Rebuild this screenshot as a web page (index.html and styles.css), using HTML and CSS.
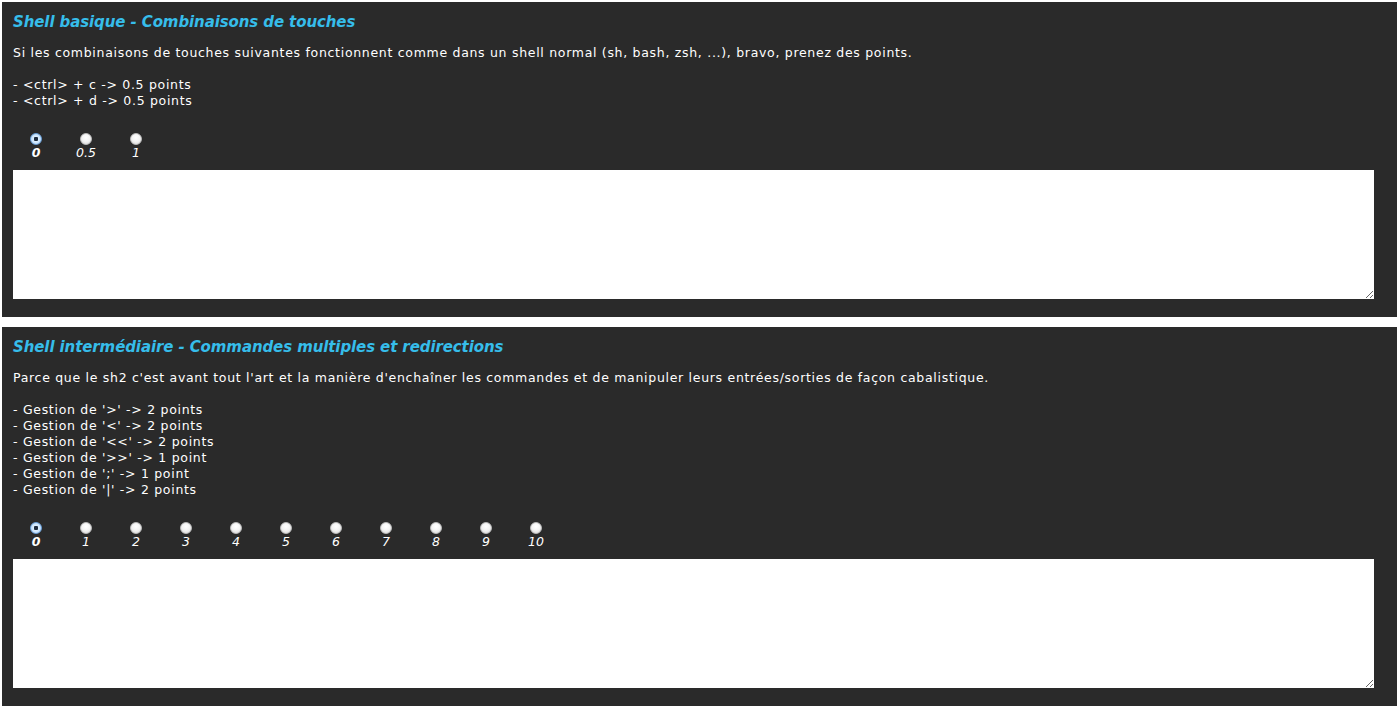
FILE: index.html
```html
<!DOCTYPE html>
<html lang="fr">
<head>
<meta charset="utf-8">
<title>Correction</title>
<link rel="stylesheet" href="styles.css">
</head>
<body>
<div class="page">
  <section class="panel">
    <h2 class="title">Shell basique - Combinaisons de touches</h2>
    <p class="desc">Si les combinaisons de touches suivantes fonctionnent comme dans un shell normal (sh, bash, zsh, ...), bravo, prenez des points.<br><br>- &lt;ctrl&gt; + c -&gt; 0.5 points<br>- &lt;ctrl&gt; + d -&gt; 0.5 points</p>
    <div class="grades">
      <label class="grade"><input type="radio" name="g1" checked><span class="num sel">0</span></label>
      <label class="grade"><input type="radio" name="g1"><span class="num">0.5</span></label>
      <label class="grade"><input type="radio" name="g1"><span class="num">1</span></label>
    </div>
    <textarea class="comment"></textarea>
  </section>
  <section class="panel">
    <h2 class="title">Shell intermédiaire - Commandes multiples et redirections</h2>
    <p class="desc">Parce que le sh2 c'est avant tout l'art et la manière d'enchaîner les commandes et de manipuler leurs entrées/sorties de façon cabalistique.<br><br>- Gestion de '&gt;' -&gt; 2 points<br>- Gestion de '&lt;' -&gt; 2 points<br>- Gestion de '&lt;&lt;' -&gt; 2 points<br>- Gestion de '&gt;&gt;' -&gt; 1 point<br>- Gestion de ';' -&gt; 1 point<br>- Gestion de '|' -&gt; 2 points</p>
    <div class="grades">
      <label class="grade"><input type="radio" name="g2" checked><span class="num sel">0</span></label>
      <label class="grade"><input type="radio" name="g2"><span class="num">1</span></label>
      <label class="grade"><input type="radio" name="g2"><span class="num">2</span></label>
      <label class="grade"><input type="radio" name="g2"><span class="num">3</span></label>
      <label class="grade"><input type="radio" name="g2"><span class="num">4</span></label>
      <label class="grade"><input type="radio" name="g2"><span class="num">5</span></label>
      <label class="grade"><input type="radio" name="g2"><span class="num">6</span></label>
      <label class="grade"><input type="radio" name="g2"><span class="num">7</span></label>
      <label class="grade"><input type="radio" name="g2"><span class="num">8</span></label>
      <label class="grade"><input type="radio" name="g2"><span class="num">9</span></label>
      <label class="grade"><input type="radio" name="g2"><span class="num">10</span></label>
    </div>
    <textarea class="comment"></textarea>
  </section>
</div>
</body>
</html>
```

FILE: styles.css
```css
html, body {
  margin: 0;
  padding: 0;
  background: #ffffff;
}
body {
  font-family: "DejaVu Sans", "Liberation Sans", sans-serif;
  color: #ffffff;
}
.page {
  display: flex;
  flex-direction: column;
  gap: 10px;
  padding: 2px 3px 0 2px;
}
.panel {
  background: #2a2a2a;
  padding: 10px 11px 18px 11px;
}
.title {
  margin: 0;
  font-size: 15px;
  line-height: 20px;
  font-weight: bold;
  font-style: italic;
  color: #36bdea;
  letter-spacing: -0.1px;
}
.desc {
  margin: 13px 0 0 0;
  font-size: 12.5px;
  line-height: 16px;
  letter-spacing: 0.7px;
}
.grades {
  display: flex;
  margin: 24px 0 0 -2px;
}
.grade {
  width: 50px;
  display: flex;
  flex-direction: column;
  align-items: center;
  gap: 1px;
}
.grade input {
  appearance: none;
  -webkit-appearance: none;
  margin: 0;
  width: 12px;
  height: 12px;
  border-radius: 50%;
  background: radial-gradient(circle at 50% 35%, #ffffff 0%, #f2f2f2 50%, #d4d4d4 100%);
  border: 1px solid #bdbdbd;
  box-sizing: border-box;
}
.grade input:checked {
  background: radial-gradient(circle, #1d2b3d 0 2px, #dbeeff 2.5px, #a9cff5 100%);
  border-color: #6a9fd8;
}
.num {
  font-size: 12.5px;
  line-height: 14px;
  font-style: italic;
}
.num.sel {
  font-weight: bold;
}
.comment {
  display: block;
  margin-top: 10px;
  width: 1361px;
  height: 129px;
  box-sizing: border-box;
  border: 0;
  background: #ffffff;
  padding: 2px;
}
```
